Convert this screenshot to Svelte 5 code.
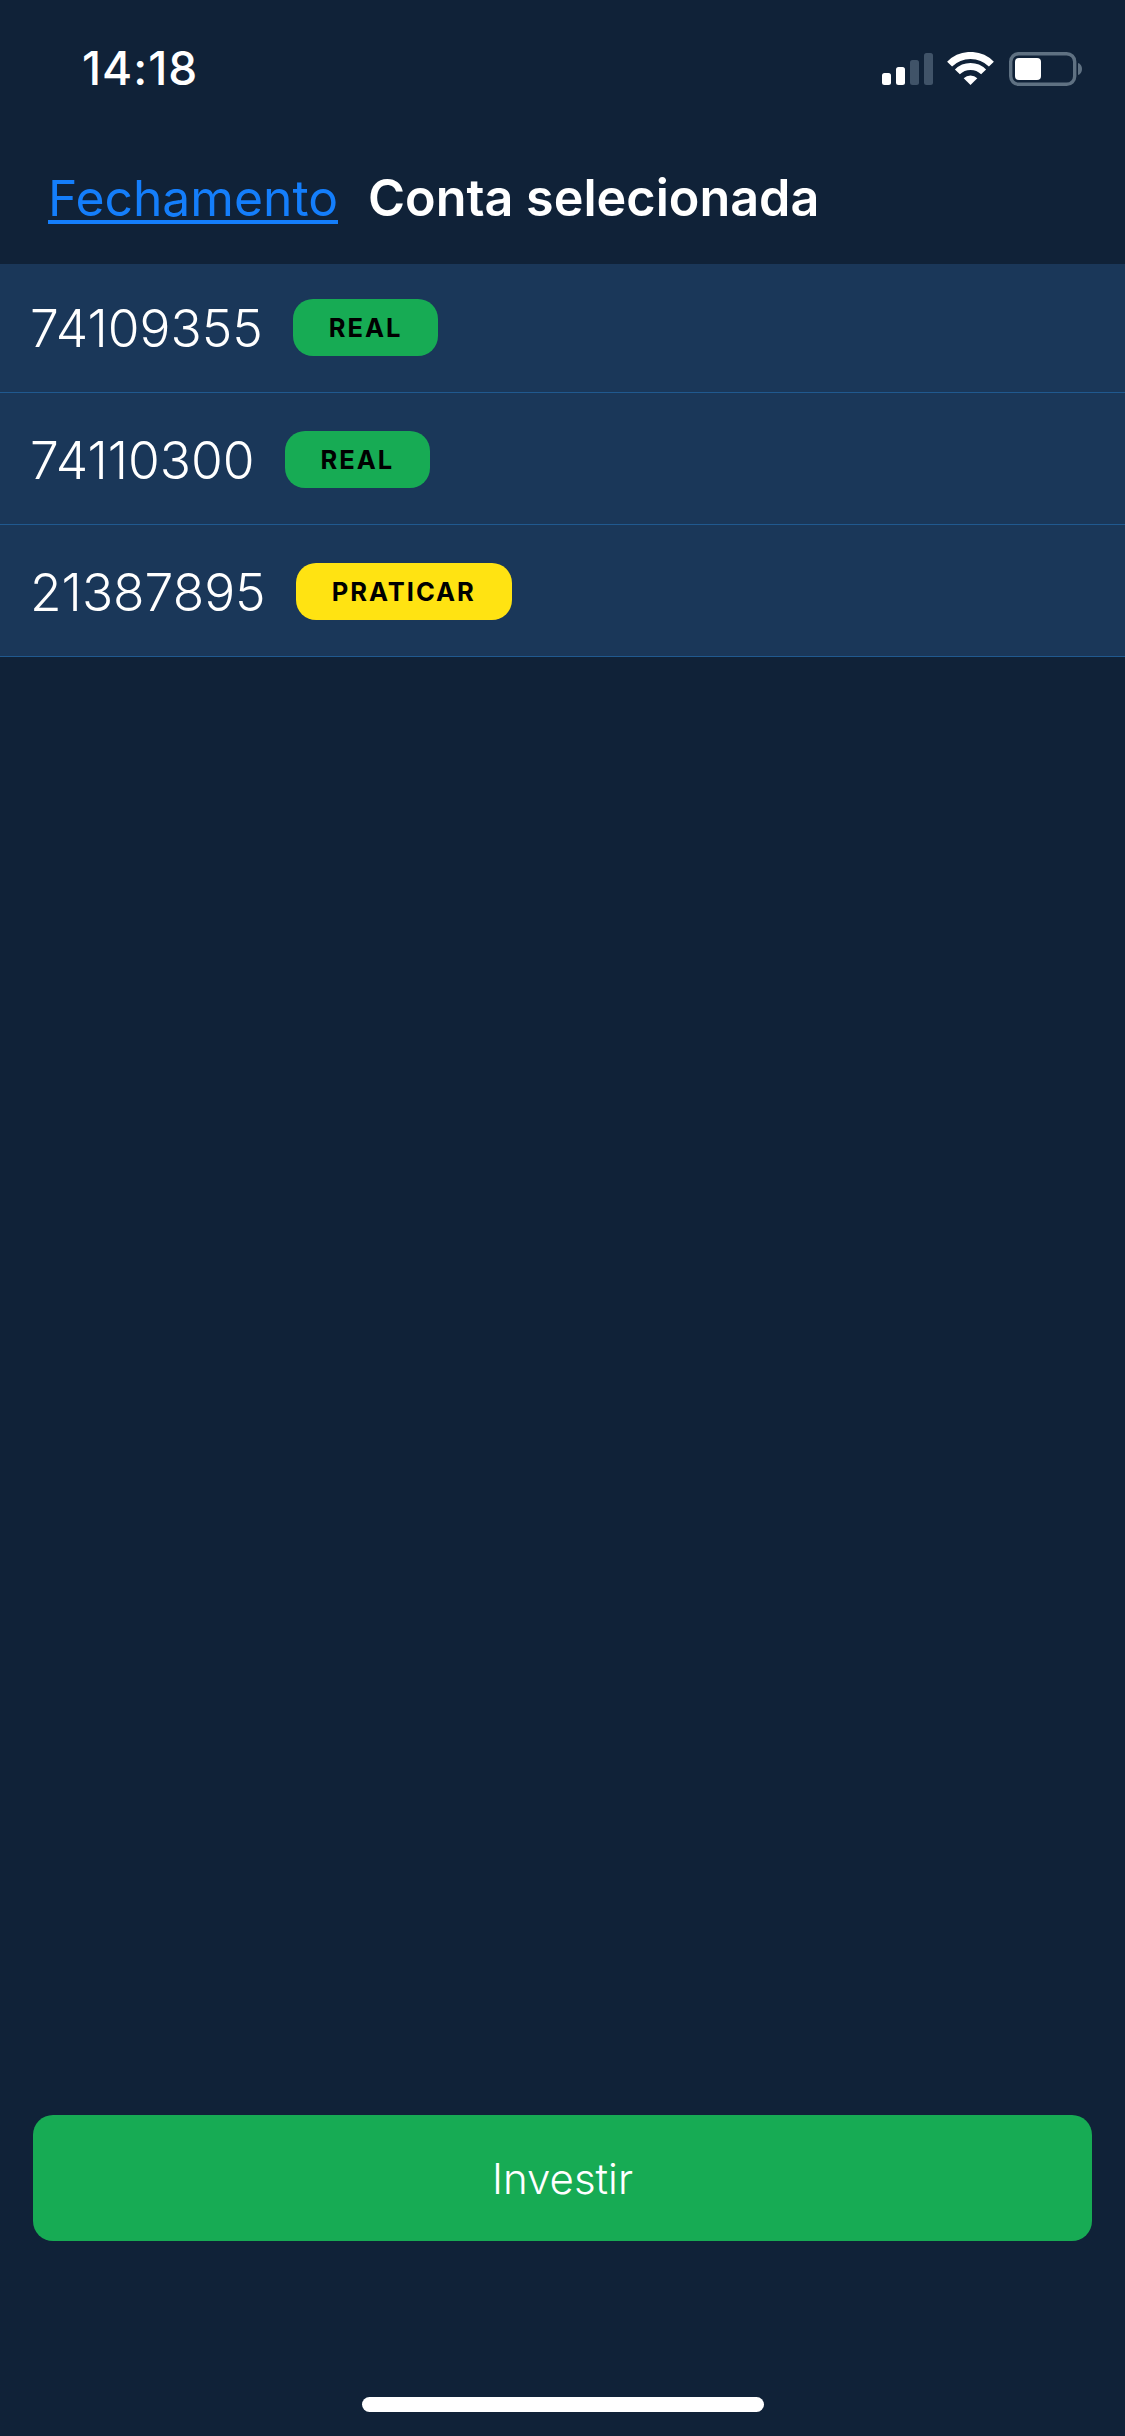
<script>
  const accounts = [
    { id: '74109355', label: 'REAL', kind: 'real' },
    { id: '74110300', label: 'REAL', kind: 'real' },
    { id: '21387895', label: 'PRATICAR', kind: 'demo' }
  ];
</script>

<div class="screen">
  <div class="status">
    <span class="time">14:18</span>
    <svg class="icons" viewBox="0 0 200 34" width="200" height="34" aria-hidden="true">
      <rect x="0" y="21" width="9" height="12" rx="2.5" fill="#fff" />
      <rect x="14" y="15" width="9" height="18" rx="2.5" fill="#fff" />
      <rect x="28" y="8" width="9" height="25" rx="2.5" fill="#405368" />
      <rect x="42" y="1" width="9" height="32" rx="2.5" fill="#405368" />
      <path d="M67.600 12.100a29.500 29.500 0 0 1 41.800 0" fill="none" stroke="#fff" stroke-width="7" />
      <path d="M75.400 19.900a18.500 18.500 0 0 1 26.200 0" fill="none" stroke="#fff" stroke-width="7" />
      <path d="M88.500 33l-6.800-6.800a9.600 9.600 0 0 1 13.600 0z" fill="#fff" />
      <rect x="128.700" y="1.700" width="64" height="30.600" rx="8" fill="none" stroke="#5f7182" stroke-width="3.400" />
      <rect x="133" y="6" width="26" height="22" rx="4" fill="#fff" />
      <path d="M196 11c2.600.8 4 3 4 6s-1.400 5.200-4 6z" fill="#5f7182" />
    </svg>
  </div>

  <nav class="nav">
    <a class="back" href="#back">Fechamento</a>
    <h1 class="title">Conta selecionada</h1>
  </nav>

  <ul class="list">
    {#each accounts as a}
      <li class="row">
        <span class="num">{a.id}</span>
        <span class="badge {a.kind}">{a.label}</span>
      </li>
    {/each}
  </ul>

  <div class="footer">
    <button class="cta">Investir</button>
    <div class="home"></div>
  </div>
</div>

<style>
  :global(body) {
    margin: 0;
    background: #102238;
  }
  .screen {
    width: 1125px;
    height: 2436px;
    display: flex;
    flex-direction: column;
    background: #102238;
    color: #fff;
    font-family: Inter, "Liberation Sans", sans-serif;
    overflow: hidden;
  }
  .status {
    height: 86px;
    padding: 0 43px 0 82px;
    display: flex;
    align-items: flex-end;
    justify-content: space-between;
    box-sizing: border-box;
  }
  .time {
    font-size: 46px;
    font-weight: 500;
    line-height: 46px;
    letter-spacing: 1px;
    margin-bottom: -5px;
  }
  .icons {
    display: block;
  }
  .nav {
    height: 178px;
    padding: 0 0 0 48px;
    display: flex;
    align-items: flex-start;
    gap: 30px;
    box-sizing: border-box;
  }
  .back {
    margin-top: 90px;
    font-size: 49.800px;
    line-height: 44px;
    font-weight: 400;
    color: #147efb;
    text-decoration: none;
    border-bottom: 4px solid #147efb;
    height: 44px;
  }
  .title {
    margin: 90px 0 0;
    font-size: 50.300px;
    line-height: 44px;
    font-weight: 600;
  }
  .list {
    list-style: none;
    margin: 0;
    padding: 0;
  }
  .row {
    display: flex;
    align-items: center;
    gap: 30px;
    padding: 38px 0 36px 30px;
    background: #1a3759;
    border-bottom: 1px solid #20598f;
  }
  .row:first-child {
    padding-top: 35px;
  }
  .num {
    font-size: 51.500px;
    line-height: 57px;
    font-weight: 300;
    transform: translateY(1px);
  }
  .badge {
    height: 57px;
    padding: 0 36px;
    border-radius: 20px;
    display: flex;
    align-items: center;
    color: #000;
    font-size: 25.500px;
    font-weight: 700;
    letter-spacing: 2px;
  }
  .real {
    background: #17ab54;
  }
  .demo {
    background: #ffe312;
  }
  .footer {
    margin-top: auto;
    padding: 0 33px 24px;
    display: flex;
    flex-direction: column;
    align-items: center;
  }
  .cta {
    width: 100%;
    height: 126px;
    border: 0;
    border-radius: 20px;
    background: #17ab54;
    color: #fff;
    font-family: inherit;
    font-size: 42px;
    font-weight: 300;
    padding: 0;
  }
  .home {
    width: 402px;
    height: 15px;
    margin-top: 156px;
    border-radius: 8px;
    background: #fff;
  }
</style>
